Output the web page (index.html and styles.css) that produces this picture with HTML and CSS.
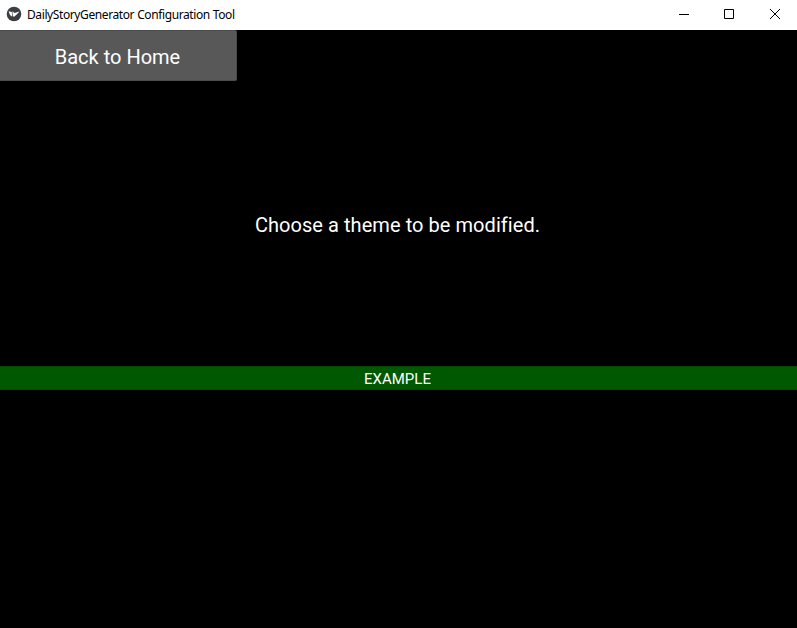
FILE: index.html
```html
<!DOCTYPE html>
<html lang="en">
<head>
<meta charset="utf-8">
<title>DailyStoryGenerator Configuration Tool</title>
<link rel="stylesheet" href="styles.css">
</head>
<body>
<div class="window">
  <header class="titlebar">
    <svg class="logo" viewBox="0 0 16 16" aria-hidden="true">
      <circle cx="8" cy="8" r="7.3" fill="#3c3f41"/>
      <path d="M2.6 5.2L5.8 6L6.2 10.7L4 9.1ZM6.4 5.3L8.5 7.1L13.5 5.6L10.7 8.4L7.9 11L6.7 9.6Z" fill="#fff"/>
    </svg>
    <span class="title">DailyStoryGenerator Configuration Tool</span>
    <div class="controls">
      <svg viewBox="0 0 46 30"><path d="M19 14.5H29"/></svg>
      <svg viewBox="0 0 46 30"><path d="M18.5 9.5H27.5V18.5H18.5Z"/></svg>
      <svg viewBox="0 0 46 30"><path d="M18 9L28 19M28 9L18 19"/></svg>
    </div>
  </header>
  <main class="screen">
    <button class="back"><span class="back-text">Back to Home</span></button>
    <div class="prompt"><span class="prompt-text">Choose a theme to be modified.</span></div>
    <button class="theme"><span class="theme-text">EXAMPLE</span></button>
  </main>
</div>
</body>
</html>
```
FILE: styles.css
```css
body {
  margin: 0;
  background: #000;
}

.window {
  display: flex;
  flex-direction: column;
  width: 797px;
  height: 628px;
  overflow: hidden;
  font-family: Roboto, sans-serif;
  font-variant-ligatures: none;
  color: #fff;
}

.titlebar {
  display: flex;
  align-items: center;
  box-sizing: border-box;
  height: 30px;
  padding-left: 6px;
  background: #fff;
  color: #000;
}

.logo {
  width: 16px;
  height: 16px;
  margin: 0 5px 2px 0;
}

.title {
  font: 12px/30px "Noto Sans", sans-serif;
  height: 30px;
  letter-spacing: -0.4px;
  word-spacing: 0.3px;
  white-space: nowrap;
}

.controls {
  display: flex;
  margin-left: auto;
  margin-right: -1px;
}

.controls svg {
  width: 46px;
  height: 30px;
  fill: none;
  stroke: #000;
  stroke-width: 1;
}

.screen {
  display: flex;
  flex-direction: column;
  flex: 1;
  background: #000;
}

button {
  box-sizing: border-box;
  padding: 0;
  color: #fff;
  font-family: inherit;
}

.back {
  width: 237px;
  height: 51px;
  border: 1px solid #4b4b4b;
  border-left: 0;
  border-radius: 0 2px 2px 0;
  background: #585858;
  font-size: 20px;
  line-height: 49px;
}

.back-text {
  display: block;
  padding: 2px 1px 0 0;
}

.prompt {
  height: 285px;
  padding-right: 2px;
  font-size: 20px;
  line-height: 288px;
  letter-spacing: 0.06px;
  text-align: center;
}

.theme {
  height: 24px;
  border: 1px solid #004a00;
  border-width: 1px 0;
  background: #005800;
  font-size: 15px;
  line-height: 22px;
}

.theme-text {
  display: block;
  padding: 1px 2px 0 0;
}
```
